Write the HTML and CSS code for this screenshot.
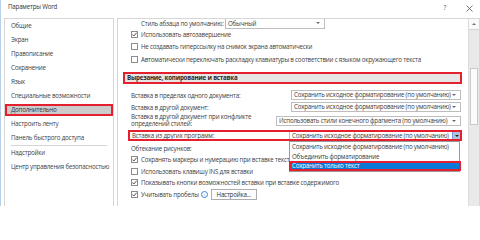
FILE: index.html
```html
<!DOCTYPE html>
<html lang="ru">
<head>
<meta charset="utf-8">
<title>Параметры Word</title>
<link rel="stylesheet" href="styles.css">
</head>
<body>
<div class="window">
  <header class="titlebar">
    <span class="title">Параметры Word</span>
    <span class="help">?</span>
    <span class="close"><svg width="7" height="7" viewBox="0 0 7 7"><path d="M0.5 0.5L6.5 6.5M6.5 0.5L0.5 6.5" stroke="#555" stroke-width="0.8" fill="none"/></svg></span>
  </header>
  <div class="body">
    <nav class="sidebar">
      <div class="nav-item">Общие</div>
      <div class="nav-item">Экран</div>
      <div class="nav-item">Правописание</div>
      <div class="nav-item">Сохранение</div>
      <div class="nav-item">Язык</div>
      <div class="nav-item">Специальные возможности</div>
      <div class="nav-item selected">Дополнительно</div>
      <div class="nav-item">Настроить ленту</div>
      <div class="nav-item">Панель быстрого доступа</div>
      <div class="nav-sep"></div>
      <div class="nav-item">Надстройки</div>
      <div class="nav-item">Центр управления безопасностью</div>
    </nav>
    <section class="main">
      <div class="content">
        <div class="row row-style">
          <span class="style-label">Стиль абзаца по умолчанию:</span>
          <div class="select select-style"><span class="select-text">Обычный</span><i class="arrow"></i></div>
        </div>
        <div class="row cbrow h11"><span class="cb"><svg viewBox="0 0 7 7"><path d="M1.3 3.5L2.8 5L5.7 1.7" stroke="#3a3a3a" stroke-width="0.9" fill="none"/></svg></span>Использовать автозавершение</div>
        <div class="row cbrow h12"><span class="cb"></span>Не создавать гиперссылку на снимок экрана автоматически</div>
        <div class="row cbrow h14"><span class="cb"></span>Автоматически переключать раскладку клавиатуры в соответствии с языком окружающего текста</div>

        <div class="section-head">Вырезание, копирование и вставка</div>

        <div class="row selrow first">
          <span>Вставка в пределах одного документа:</span>
          <div class="select w170"><span class="select-text">Сохранить исходное форматирование (по умолчанию)</span><i class="arrow"></i></div>
        </div>
        <div class="row selrow">
          <span>Вставка в другой документ:</span>
          <div class="select w170"><span class="select-text">Сохранить исходное форматирование (по умолчанию)</span><i class="arrow"></i></div>
        </div>
        <div class="row selrow tall">
          <span class="two-line">Вставка в другой документ при конфликте<br>определений стилей:</span>
          <div class="select w185"><span class="select-text">Использовать стили конечного фрагмента (по умолчанию)</span><i class="arrow"></i></div>
        </div>
        <div class="row selrow marked">
          <span>Вставка из других программ:</span>
          <div class="select w172 open"><span class="select-text">Сохранить исходное форматирование (по умолчанию)</span><span class="arrow-btn"><i class="arrow dark"></i></span></div>
        </div>
        <div class="row plain h11 gap2">Обтекание рисунков:</div>
        <div class="row cbrow h11"><span class="cb"><svg viewBox="0 0 7 7"><path d="M1.3 3.5L2.8 5L5.7 1.7" stroke="#3a3a3a" stroke-width="0.9" fill="none"/></svg></span><span class="clipped">Сохранять маркеры и нумерацию при вставке текста с параметром «Сохранить только текст»</span></div>
        <div class="row cbrow h12"><span class="cb"></span>Использовать клавишу INS для вставки</div>
        <div class="row cbrow h11"><span class="cb"><svg viewBox="0 0 7 7"><path d="M1.3 3.5L2.8 5L5.7 1.7" stroke="#3a3a3a" stroke-width="0.9" fill="none"/></svg></span>Показывать кнопки возможностей вставки при вставке содержимого</div>
        <div class="row cbrow h12"><span class="cb"><svg viewBox="0 0 7 7"><path d="M1.3 3.5L2.8 5L5.7 1.7" stroke="#3a3a3a" stroke-width="0.9" fill="none"/></svg></span>Учитывать пробелы<span class="info">i</span><span class="button">Настройка...</span></div>
      </div>
      <div class="scrollbar">
        <div class="scroll-up"><i class="up"></i></div>
        <div class="thumb"></div>
      </div>
      <ul class="dropdown-list">
        <li class="opt">Сохранить исходное форматирование (по умолчанию)</li>
        <li class="opt">Объединить форматирование</li>
        <li class="opt active">Сохранить только текст</li>
      </ul>
    </section>
  </div>
</div>
</body>
</html>
```

FILE: styles.css
```css
html, body {
  margin: 0;
  padding: 0;
}
body {
  width: 480px;
  height: 206px;
  overflow: hidden;
  background: #fff;
  font-family: "Open Sans", "Noto Sans", sans-serif;
  font-size: 6.2px;
  letter-spacing: -0.2px;
  color: #404040;
}
.window {
  height: 206px;
  border-left: 1px solid #b9d0ea;
  box-sizing: border-box;
}
.titlebar {
  height: 18px;
  display: flex;
  align-items: flex-start;
}
.title {
  margin-left: 7px;
  line-height: 14px;
  font-size: 6.2px;
  color: #333;
}
.help {
  margin-left: auto;
  margin-right: 20px;
  line-height: 16px;
  font-size: 6.5px;
  color: #555;
}
.close {
  margin-top: 5px;
  margin-right: 7px;
  display: block;
  height: 7px;
}
.close svg { display: block; }

.body {
  display: flex;
  padding-left: 3px;
  gap: 3px;
}
.sidebar {
  width: 110px;
  height: 200px;
  box-sizing: border-box;
  border: 1px solid #d6d6d6;
}
.nav-item {
  height: 14px;
  line-height: 14px;
  padding-left: 6px;
  white-space: nowrap;
}
.nav-item.selected {
  height: 12px;
  line-height: 8px;
  margin: 1px 0;
  box-sizing: border-box;
  border: 2px solid #e5202e;
  padding-left: 4px;
  background: #cccccc;
  color: #333;
}
.nav-sep {
  height: 1px;
  background: #d6d6d6;
  margin: 0 6px;
}

.main {
  position: relative;
  flex: 1;
  height: 200px;
  box-sizing: border-box;
  border: 1px solid #d6d6d6;
  display: flex;
  overflow: hidden;
}
.content {
  width: 343px;
  flex: none;
}
.row {
  display: flex;
  align-items: center;
  white-space: nowrap;
  padding-left: 13px;
}
.h11 { height: 11px; }
.h12 { height: 12px; }
.h14 { height: 14px; }
.gap2 { margin-top: 2px; }

.row-style {
  height: 10px;
  align-items: flex-start;
  padding-left: 23px;
}
.style-label {
  width: 84px;
  line-height: 10px;
}
.select {
  position: relative;
  height: 10px;
  box-sizing: border-box;
  border: 1px solid #bdbdbd;
  background: #fff;
  display: flex;
  align-items: center;
  margin-left: auto;
  overflow: hidden;
}
.select-style {
  margin-left: 0;
  width: 100px;
  height: 12px;
  margin-top: -2px;
  padding-top: 1px;
}
.select-text {
  padding-left: 2px;
  line-height: 8px;
  color: #3a3a3a;
}
.arrow {
  position: absolute;
  right: 4px;
  top: 50%;
  margin-top: -1px;
  width: 0;
  height: 0;
  border-left: 2px solid transparent;
  border-right: 2px solid transparent;
  border-top: 2px solid #6b6b6b;
}
.arrow.dark { border-top-color: #222; right: 1.5px; }
.w170 { width: 170px; }
.w185 { width: 185px; }
.w172 { width: 172px; }

.cb {
  width: 7px;
  height: 7px;
  box-sizing: border-box;
  border: 1px solid #8c8c8c;
  margin-right: 3px;
  flex: none;
  display: block;
  background: #fff;
}
.cb svg {
  display: block;
  width: 7px;
  height: 7px;
  margin: -1px;
}
.clipped {
  width: 148px;
  overflow: hidden;
}

.section-head {
  margin-top: 6px;
  margin-left: 5px;
  width: 339px;
  height: 12px;
  box-sizing: border-box;
  border: 2px solid #e5202e;
  background: #e6e6e6;
  font-weight: 700;
  line-height: 8px;
  padding-left: 2px;
  color: #2b2b2b;
  white-space: nowrap;
}

.selrow {
  height: 10px;
  margin-top: 2px;
}
.selrow.first { margin-top: 6px; }
.selrow.tall { height: 14px; }
.two-line { line-height: 6.8px; }

.selrow.marked {
  position: relative;
  height: 11px;
  margin-left: 10px;
  width: 334px;
  box-sizing: border-box;
  padding-left: 4px;
}
.selrow.marked::after {
  content: "";
  position: absolute;
  inset: 0;
  border: 2px solid #e5202e;
}
.select.open {
  height: 9px;
  margin-right: 1px;
}
.arrow-btn {
  position: absolute;
  right: 0;
  top: 0;
  bottom: 0;
  width: 7px;
  background: #a9c3e4;
  border-left: 1px solid #7c9ccb;
}

.info {
  display: inline-block;
  width: 5px;
  height: 5px;
  border: 0.8px solid #3d82d6;
  border-radius: 50%;
  color: #3d82d6;
  font-size: 4px;
  letter-spacing: 0;
  line-height: 5px;
  text-align: center;
  margin-left: 2px;
}
.button {
  margin-left: 3px;
  width: 46px;
  height: 11px;
  box-sizing: border-box;
  border: 1px solid #adadad;
  background: #fdfdfd;
  text-align: center;
  line-height: 9px;
  color: #333;
  align-self: flex-end;
}

.scrollbar {
  margin-left: auto;
  width: 11px;
  flex: none;
  background: #e9e9e9;
  border-left: 1px solid #dcdcdc;
  box-sizing: border-box;
}
.scroll-up {
  height: 11px;
  background: #fafafa;
  border-bottom: 1px solid #d4d4d4;
  box-sizing: border-box;
  display: flex;
  align-items: center;
  justify-content: center;
}
.up {
  width: 0;
  height: 0;
  border-left: 2px solid transparent;
  border-right: 2px solid transparent;
  border-bottom: 2px solid #707070;
}
.thumb {
  margin-top: 38px;
  height: 57px;
  width: 8px;
  margin-left: 1px;
  box-sizing: border-box;
  background: #fbfbfb;
  border: 1px solid #c9c9c9;
}

.dropdown-list {
  position: absolute;
  left: 171px;
  top: 122px;
  width: 171px;
  margin: 0;
  padding: 0;
  list-style: none;
  background: #fff;
  border: 1px solid #9a9a9a;
  box-sizing: border-box;
  height: 31px;
}
.opt {
  height: 10px;
  line-height: 10px;
  padding-left: 2px;
  white-space: nowrap;
  color: #3a3a3a;
}
.opt:nth-child(2) { height: 9px; line-height: 9px; }
.opt.active {
  position: relative;
  height: 10px;
  line-height: 10px;
  margin: 0 -2px 0 -1px;
  background: #0a78d7;
  color: #fff;
  padding-left: 3px;
}
.opt.active::after {
  content: "";
  position: absolute;
  inset: 0;
  border: 2px solid #e5202e;
}
```
